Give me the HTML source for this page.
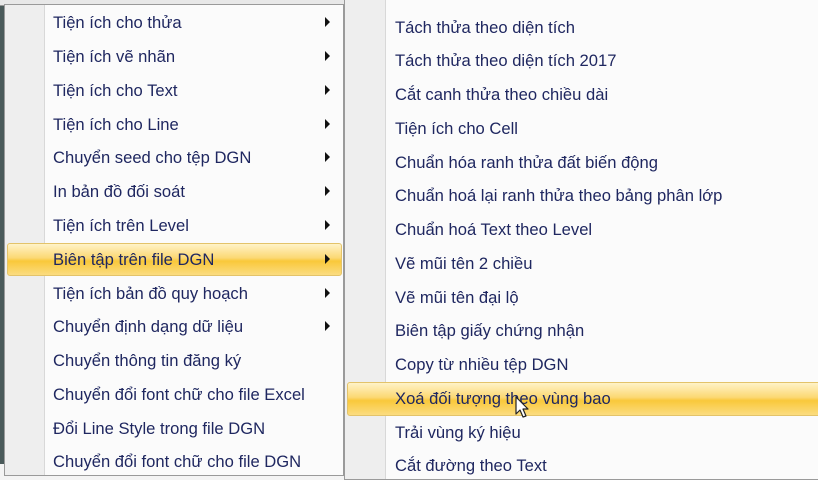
<!DOCTYPE html>
<html><head><meta charset="utf-8"><style>
html,body{margin:0;padding:0;width:818px;height:464px;overflow:hidden;background:#f4f4f4;font-family:"Liberation Sans","DejaVu Sans",sans-serif;}
.strip{position:absolute;left:0;top:0;width:4px;height:464px;background:#4a5a5a;}
.top{position:absolute;left:0;top:0;width:818px;height:5px;background:#e8e8e8;border-bottom:1px solid #999;}
.menu{position:absolute;background:#fbfbfb;border:1px solid #9a9a9a;}
.gut{position:absolute;top:0;bottom:0;background:#eeeeee;border-right:1px solid #d8d8d8;}
.it{position:absolute;font-size:16.6px;color:#1f2760;white-space:nowrap;line-height:20px;}
.arr{position:absolute;width:0;height:0;border-top:5px solid transparent;border-bottom:5px solid transparent;border-left:5px solid #111;}
.hl{position:absolute;border:1px solid #e3c36a;border-radius:3px;background:linear-gradient(#fff3c8,#fcd873 45%,#f9c83a 55%,#fbdc80);}
</style></head><body>
<div class="strip"></div>
<div class="top"></div>
<div class="menu" style="left:4px;top:4px;width:338px;height:470px;">
 <div class="gut" style="left:0;width:39px;"></div>
</div>
<div class="menu" style="left:344px;top:-2px;width:480px;height:480px;border-right:none;">
 <div class="gut" style="left:0;width:40px;"></div>
</div>
<div class="hl" style="left:7px;top:243px;width:333px;height:31px;"></div>
<div class="hl" style="left:347px;top:382px;width:472px;height:32px;"></div>

<div class="it" style="left:53px;top:13px">Tiện ích cho thửa</div>
<div class="it" style="left:53px;top:47px">Tiện ích vẽ nhãn</div>
<div class="it" style="left:53px;top:81px">Tiện ích cho Text</div>
<div class="it" style="left:53px;top:115px">Tiện ích cho Line</div>
<div class="it" style="left:53px;top:148px">Chuyển seed cho tệp DGN</div>
<div class="it" style="left:53px;top:182px">In bản đồ đối soát</div>
<div class="it" style="left:53px;top:216px">Tiện ích trên Level</div>
<div class="it" style="left:53px;top:250px">Biên tập trên file DGN</div>
<div class="it" style="left:53px;top:284px">Tiện ích bản đồ quy hoạch</div>
<div class="it" style="left:53px;top:317px">Chuyển định dạng dữ liệu</div>
<div class="it" style="left:53px;top:351px">Chuyển thông tin đăng ký</div>
<div class="it" style="left:53px;top:385px">Chuyển đổi font chữ cho file Excel</div>
<div class="it" style="left:53px;top:419px">Đổi Line Style trong file DGN</div>
<div class="it" style="left:53px;top:452px">Chuyển đổi font chữ cho file DGN</div>

<div class="arr" style="left:325px;top:17px"></div>
<div class="arr" style="left:325px;top:51px"></div>
<div class="arr" style="left:325px;top:85px"></div>
<div class="arr" style="left:325px;top:119px"></div>
<div class="arr" style="left:325px;top:152px"></div>
<div class="arr" style="left:325px;top:186px"></div>
<div class="arr" style="left:325px;top:220px"></div>
<div class="arr" style="left:325px;top:254px"></div>
<div class="arr" style="left:325px;top:288px"></div>
<div class="arr" style="left:325px;top:321px"></div>

<div class="it" style="left:395px;top:18px">Tách thửa theo diện tích</div>
<div class="it" style="left:395px;top:51px">Tách thửa theo diện tích 2017</div>
<div class="it" style="left:395px;top:85px">Cắt canh thửa theo chiều dài</div>
<div class="it" style="left:395px;top:119px">Tiện ích cho Cell</div>
<div class="it" style="left:395px;top:153px">Chuẩn hóa ranh thửa đất biến động</div>
<div class="it" style="left:395px;top:186px">Chuẩn hoá lại ranh thửa theo bảng phân lớp</div>
<div class="it" style="left:395px;top:220px">Chuẩn hoá Text theo Level</div>
<div class="it" style="left:395px;top:254px">Vẽ mũi tên 2 chiều</div>
<div class="it" style="left:395px;top:288px">Vẽ mũi tên đại lộ</div>
<div class="it" style="left:395px;top:321px">Biên tập giấy chứng nhận</div>
<div class="it" style="left:395px;top:355px">Copy từ nhiều tệp DGN</div>
<div class="it" style="left:395px;top:389px">Xoá đối tượng theo vùng bao</div>
<div class="it" style="left:395px;top:423px">Trải vùng ký hiệu</div>
<div class="it" style="left:395px;top:456px">Cắt đường theo Text</div>

<svg style="position:absolute;left:515px;top:396px" width="16" height="26" viewBox="0 0 16 26"><path d="M1 1 L1 18 L5 14 L8 21 L11 20 L8 13 L13 13 Z" fill="#fff" stroke="#222" stroke-width="1.2" stroke-linejoin="round"/></svg>
</body></html>
